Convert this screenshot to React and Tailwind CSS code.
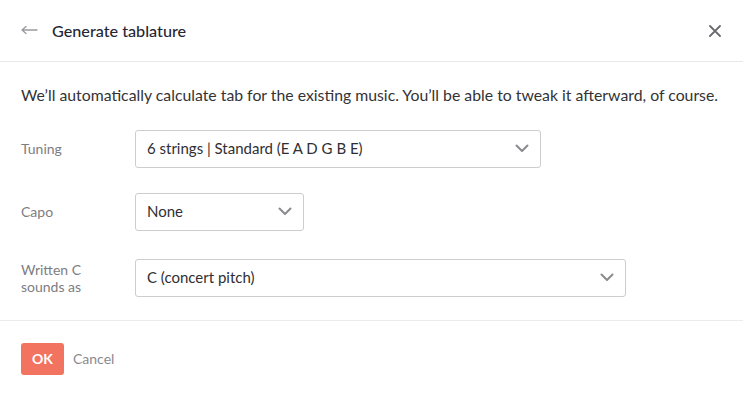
import React from "react";

const Chevron = () => (
  <svg width="14" height="9" viewBox="0 0 14 9" fill="none" className="shrink-0">
    <path d="M1.5 1.5 L7 7 L12.5 1.5" stroke="#8a8a8f" strokeWidth="2" strokeLinecap="round" strokeLinejoin="round" />
  </svg>
);

function Select({ value, width }) {
  return (
    <div
      className={`flex h-[38px] items-center justify-between rounded-[3px] border border-[#cdcdcd] bg-white pl-[11px] pr-[11px] ${width}`}
    >
      <span className="text-[15px] text-[#2f2f33]">{value}</span>
      <Chevron />
    </div>
  );
}

export default function App() {
  return (
    <div className="flex h-[396px] w-[743px] flex-col bg-white font-['Lato','Open_Sans',sans-serif]">
      <div className="flex h-[62px] items-center justify-between border-b border-[#e8e8e8] pl-[21px] pr-[22px]">
        <div className="flex items-center gap-[14px]">
          <svg width="17" height="10" viewBox="0 0 17 10" fill="none">
            <path d="M1 5 H16 M1 5 L5 1.5 M1 5 L5 8.5" stroke="#9a9aa0" strokeWidth="1.3" strokeLinecap="round" />
          </svg>
          <span className="pt-[2px] text-[16.2px] font-medium text-[#262633]">Generate tablature</span>
        </div>
        <svg width="12" height="12" viewBox="0 0 12 12" fill="none">
          <path d="M1 1 L11 11 M11 1 L1 11" stroke="#6a6a70" strokeWidth="1.8" strokeLinecap="round" />
        </svg>
      </div>

      <div className="flex flex-1 flex-col px-[21px] pt-[21px]">
        <p className="text-[15.8px] text-[#333336]">
          We’ll automatically calculate tab for the existing music. You’ll be able to tweak it afterward, of course.
        </p>
        <div className="mt-[23px] flex items-center">
          <span className="w-[114px] text-[14px] text-[#7d7d82]">Tuning</span>
          <Select value="6 strings | Standard (E A D G B E)" width="w-[406px]" />
        </div>
        <div className="mt-[25px] flex items-center">
          <span className="w-[114px] text-[14px] text-[#7d7d82]">Capo</span>
          <Select value="None" width="w-[169px]" />
        </div>
        <div className="mt-[28px] flex items-center">
          <span className="w-[114px] text-[14px] leading-[17px] text-[#7d7d82]">
            Written C
            <br />
            sounds as
          </span>
          <Select value="C (concert pitch)" width="w-[491px]" />
        </div>
      </div>

      <div className="flex h-[76px] items-center gap-[9px] border-t border-[#ececec] pl-[21px]">
        <button className="flex h-[32px] w-[43px] items-center justify-center rounded-[3px] bg-[#f2735f] text-[14px] font-bold text-white">
          OK
        </button>
        <span className="text-[14px] text-[#8a8a8f]">Cancel</span>
      </div>
    </div>
  );
}
